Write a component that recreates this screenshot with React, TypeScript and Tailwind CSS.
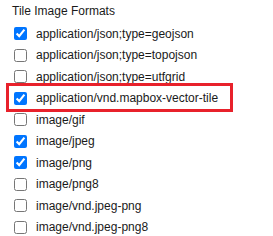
const FORMATS = [
  { label: "application/json;type=geojson", checked: true },
  { label: "application/json;type=topojson", checked: false },
  { label: "application/json;type=utfgrid", checked: false },
  { label: "application/vnd.mapbox-vector-tile", checked: true, highlight: true },
  { label: "image/gif", checked: false },
  { label: "image/jpeg", checked: true },
  { label: "image/png", checked: true },
  { label: "image/png8", checked: false },
  { label: "image/vnd.jpeg-png", checked: false },
  { label: "image/vnd.jpeg-png8", checked: false },
];

export default function App() {
  return (
    <div className="h-[236px] w-[273px] overflow-hidden bg-white font-['Liberation_Sans',Arial,sans-serif] text-[12px] text-[#1a1a1a]">
      <div className="h-[23px] pl-[12px] leading-[23px]">Tile Image Formats</div>
      <div className="flex flex-col">
        {FORMATS.map((f) => (
          <label key={f.label} className="relative flex h-[21.5px] items-center gap-[9px] pl-[14px]">
            <input
              type="checkbox"
              defaultChecked={f.checked}
              className="m-0 h-[13px] w-[13px] shrink-0 accent-[#0075ff]"
            />
            <span className="whitespace-nowrap">{f.label}</span>
            {f.highlight && (
              <span className="pointer-events-none absolute left-[6px] top-[-4.5px] h-[29px] w-[227px] border-[3px] border-[#e8212b]" />
            )}
          </label>
        ))}
      </div>
    </div>
  );
}
